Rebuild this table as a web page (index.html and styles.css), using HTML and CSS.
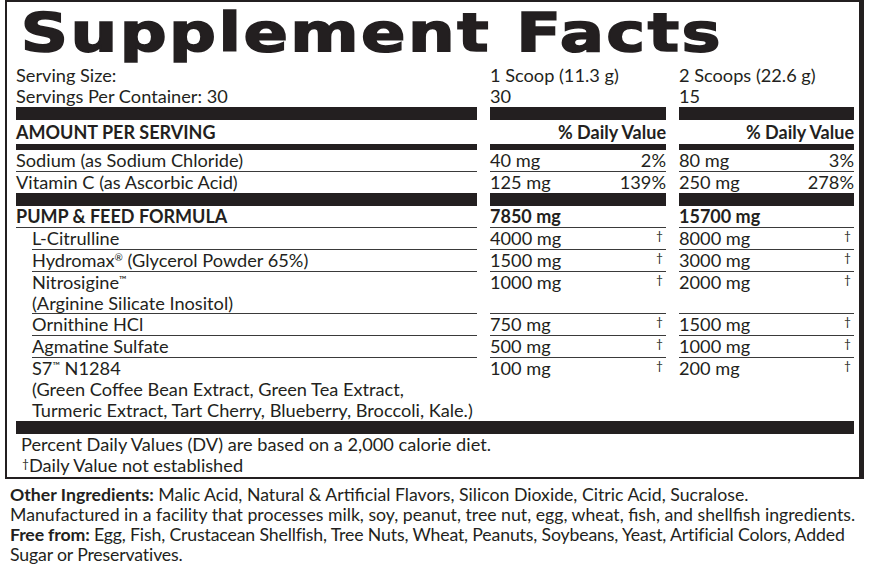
FILE: index.html
```html
<!DOCTYPE html>
<html>
<head>
<meta charset="utf-8">
<link rel="stylesheet" href="styles.css">
</head>
<body>
<div class="label">
  <div class="title-wrap"><h1 class="title">Supplement Facts</h1></div>

  <div class="row serving">
    <div>Serving Size:<br>Servings Per Container: 30</div>
    <div>1 Scoop (11.3 g)<br>30</div>
    <div>2 Scoops (22.6 g)<br>15</div>
  </div>

  <div class="row bar bar-lg"><div></div><div></div><div></div></div>

  <div class="row head">
    <div class="b">AMOUNT PER SERVING</div>
    <div class="b ra">% Daily Value</div>
    <div class="b ra">% Daily Value</div>
  </div>

  <div class="row bar bar-sm"><div></div><div></div><div></div></div>

  <div class="row item lined">
    <div>Sodium (as Sodium Chloride)</div>
    <div class="split"><span>40 mg</span><span>2%</span></div>
    <div class="split"><span>80 mg</span><span>3%</span></div>
  </div>
  <div class="row item">
    <div>Vitamin C (as Ascorbic Acid)</div>
    <div class="split"><span>125 mg</span><span>139%</span></div>
    <div class="split"><span>250 mg</span><span>278%</span></div>
  </div>

  <div class="row bar bar-lg"><div></div><div></div><div></div></div>

  <div class="row item lined">
    <div class="b">PUMP &amp; FEED FORMULA</div>
    <div class="b">7850 mg</div>
    <div class="b">15700 mg</div>
  </div>
  <div class="row item lined sub">
    <div>L-Citrulline</div>
    <div class="split"><span>4000 mg</span><span class="dag">†</span></div>
    <div class="split"><span>8000 mg</span><span class="dag">†</span></div>
  </div>
  <div class="row item lined sub">
    <div>Hydromax<sup class="reg">®</sup> (Glycerol Powder 65%)</div>
    <div class="split"><span>1500 mg</span><span class="dag">†</span></div>
    <div class="split"><span>3000 mg</span><span class="dag">†</span></div>
  </div>
  <div class="row item lined sub">
    <div>Nitrosigine<sup class="tm">™</sup><br>(Arginine Silicate Inositol)</div>
    <div class="split"><span>1000 mg</span><span class="dag">†</span></div>
    <div class="split"><span>2000 mg</span><span class="dag">†</span></div>
  </div>
  <div class="row item lined sub">
    <div>Ornithine HCl</div>
    <div class="split"><span>750 mg</span><span class="dag">†</span></div>
    <div class="split"><span>1500 mg</span><span class="dag">†</span></div>
  </div>
  <div class="row item lined sub">
    <div>Agmatine Sulfate</div>
    <div class="split"><span>500 mg</span><span class="dag">†</span></div>
    <div class="split"><span>1000 mg</span><span class="dag">†</span></div>
  </div>
  <div class="row item sub">
    <div>S7<sup class="tm">™</sup> N1284<br>(Green Coffee Bean Extract, Green Tea Extract,<br>Turmeric Extract, Tart Cherry, Blueberry, Broccoli, Kale.)</div>
    <div class="split"><span>100 mg</span><span class="dag">†</span></div>
    <div class="split"><span>200 mg</span><span class="dag">†</span></div>
  </div>

  <div class="fullbar"></div>

  <div class="foot">
    <p>Percent Daily Values (DV) are based on a 2,000 calorie diet.</p>
    <p><span class="fdag">†</span>Daily Value not established</p>
  </div>
</div>

<div class="other">
  <p><b>Other Ingredients:</b> Malic Acid, Natural &amp; Artificial Flavors, Silicon Dioxide, Citric Acid, Sucralose.</p>
  <p>Manufactured in a facility that processes milk, soy, peanut, tree nut, egg, wheat, fish, and shellfish ingredients.</p>
  <p class="tight"><b>Free from:</b> Egg, Fish, Crustacean Shellfish, Tree Nuts, Wheat, Peanuts, Soybeans, Yeast, Artificial Colors, Added<br>Sugar or Preservatives.</p>
</div>
</body>
</html>
```

FILE: styles.css
```css
* { box-sizing: border-box; }

html, body {
  margin: 0;
  padding: 0;
  background: #fff;
}

body {
  color: #231f20;
  font-family: "Lato", "Liberation Sans", sans-serif;
  font-size: 18.2px;
  line-height: 21px;
}

.label {
  margin-left: 5px;
  width: 859px;
  border-top: 2px solid #231f20;
  border-left: 2px solid #231f20;
  border-right: 5px solid #231f20;
  border-bottom: 2px solid #231f20;
  padding: 0 5px 0 9px;
}

.title-wrap {
  height: 62px;
  overflow: visible;
}

.title {
  margin: 0;
  padding-left: 4px;
  font-family: "DejaVu Sans", sans-serif;
  font-weight: 700;
  font-size: 54px;
  line-height: 62px;
  letter-spacing: 2px;
  display: inline-block;
  transform: scaleX(1.215);
  transform-origin: left center;
  white-space: nowrap;
  -webkit-text-stroke: 1.6px #231f20;
}

.row {
  display: grid;
  grid-template-columns: 461px 176px 175px;
  column-gap: 13px;
}

.row > div:first-child { white-space: nowrap; }

.serving {
  height: 43px;
  padding-top: 1px;
}

.bar > div { background: #231f20; }
.bar-lg { height: 13px; }
.bar-sm { height: 6px; }

.head {
  height: 24px;
  padding-top: 2px;
}

.b { font-weight: 700; font-size: 18px; }
.ra { text-align: right; }

.item > div {
  min-height: 21px;
}

.lined > div {
  border-bottom: 1px solid #3a3a3a;
}

.sub > div:first-child {
  padding-left: 16px;
}
.sub.lined > div:first-child {
  border-bottom: none;
  background: linear-gradient(#3a3a3a, #3a3a3a) 16px 100% / calc(100% - 16px) 1px no-repeat;
}

.split {
  display: flex;
  justify-content: space-between;
  align-items: flex-start;
}

.dag {
  font-size: 12px;
  line-height: 16px;
  padding-right: 3px;
}

sup {
  font-size: 10px;
  line-height: 0;
  vertical-align: 6px;
}

.fullbar {
  height: 13px;
  background: #231f20;
}

.foot {
  padding-left: 5px;
  padding-bottom: 1px;
}
.foot p { margin: 0; }

.fdag {
  font-size: 12px;
  vertical-align: 4px;
  line-height: 0;
  margin-left: 1px;
}

.other {
  padding: 6px 0 0 10px;
  font-size: 17.7px;
  line-height: 20px;
}
.other p { margin: 0; white-space: nowrap; }
.other b { font-weight: 700; }
.other .tight { letter-spacing: -0.15px; }
```
